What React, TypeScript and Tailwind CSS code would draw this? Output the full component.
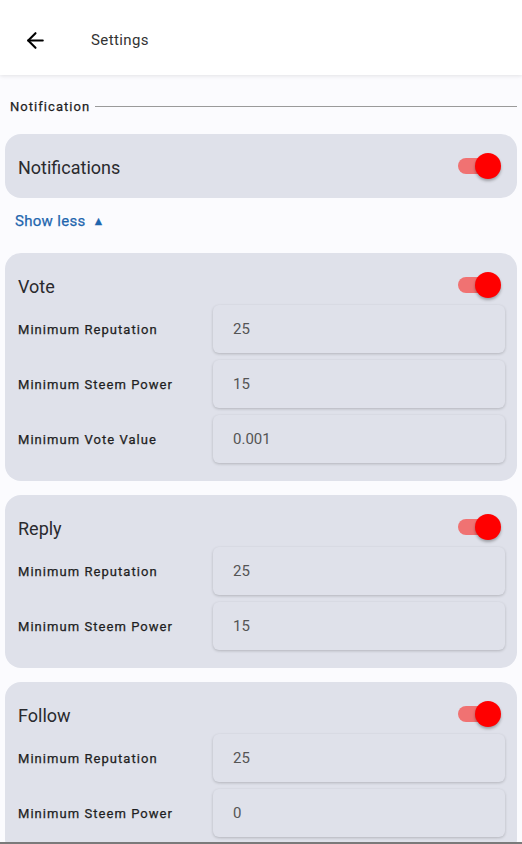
import { ArrowLeft } from "lucide-react";

type Field = { label: string; value: string };

const groups: { title: string; fields: Field[] }[] = [
  {
    title: "Vote",
    fields: [
      { label: "Minimum Reputation", value: "25" },
      { label: "Minimum Steem Power", value: "15" },
      { label: "Minimum Vote Value", value: "0.001" }
    ]
  },
  {
    title: "Reply",
    fields: [
      { label: "Minimum Reputation", value: "25" },
      { label: "Minimum Steem Power", value: "15" }
    ]
  },
  {
    title: "Follow",
    fields: [
      { label: "Minimum Reputation", value: "25" },
      { label: "Minimum Steem Power", value: "0" }
    ]
  }
];

function Toggle() {
  return (
    <div className="relative h-[32px] w-[46px] shrink-0">
      <div className="absolute left-[3px] top-[8px] h-[16px] w-[38px] rounded-full bg-[#f07272]" />
      <div className="absolute right-0 top-[3px] h-[26px] w-[26px] rounded-full bg-[#ff0000] shadow-[0_2px_3px_rgba(0,0,0,0.3)]" />
    </div>
  );
}

function GroupCard({ title, fields }: { title: string; fields: Field[] }) {
  return (
    <div className="mx-[5px] rounded-2xl bg-[#dfe1ea] pb-[18px] pl-[13px] pr-[12px] pt-[16px]">
      <div className="flex h-[32px] items-center justify-between pr-[4px]">
        <span className="pt-[3px] text-[18px] text-[#2a2a2e]">{title}</span>
        <Toggle />
      </div>
      <div className="mt-[4px] flex flex-col gap-[7px]">
        {fields.map(field => (
          <div key={field.label} className="flex items-center">
            <span className="w-[195px] shrink-0 pt-[2px] text-[13px] tracking-[1.05px] text-[#1e1e22] [-webkit-text-stroke:0.25px_#1e1e22]">{field.label}</span>
            <div className="flex h-[48px] flex-1 items-center rounded-md bg-[#dfe1ea] pl-[20px] pt-[2px] text-[15px] text-[#555] shadow-[0_1px_3px_rgba(0,0,0,0.2)]">
              {field.value}
            </div>
          </div>
        ))}
      </div>
    </div>
  );
}

export default function App() {
  return (
    <div className="flex h-[844px] flex-col overflow-hidden bg-[#fbfbfe]" style={{ fontFamily: "Roboto, sans-serif" }}>
      <header className="relative z-10 flex h-[75px] shrink-0 items-center bg-white pt-[6px] shadow-[0_1px_4px_rgba(0,0,0,0.1)]">
        <ArrowLeft className="ml-[23px] h-[25px] w-[25px] text-black" strokeWidth={2} />
        <span className="ml-[43px] text-[15px] tracking-[0.4px] text-[#333]">Settings</span>
      </header>
      <div className="flex-1 overflow-hidden">
        <div className="flex items-center pl-[10px] pr-[5px] pt-[22px]">
          <span className="text-[13px] tracking-[1.05px] text-[#1e1e22] [-webkit-text-stroke:0.25px_#1e1e22]">Notification</span>
          <div className="ml-[5px] h-px flex-1 bg-[#9a9a9a]" />
        </div>
        <div className="mx-[5px] mt-[17px] flex h-[64px] items-center justify-between rounded-2xl bg-[#dfe1ea] pl-[13px] pr-[16px]">
          <span className="pt-[3px] text-[18px] text-[#2a2a2e]">Notifications</span>
          <Toggle />
        </div>
        <div className="flex h-[44px] items-center pl-[15px] pt-[3px] text-[15px] tracking-[0.3px] text-[#1f66ae] [-webkit-text-stroke:0.25px_#1f66ae]">
          Show less <span className="ml-[7px] text-[12px]">▲</span>
        </div>
        <div className="mt-[11px] flex flex-col gap-[14px]">
          {groups.map(group => <GroupCard key={group.title} title={group.title} fields={group.fields} />)}
        </div>
      </div>
      <div className="h-[2px] shrink-0 bg-[#7a7a7a]" />
    </div>
  );
}
